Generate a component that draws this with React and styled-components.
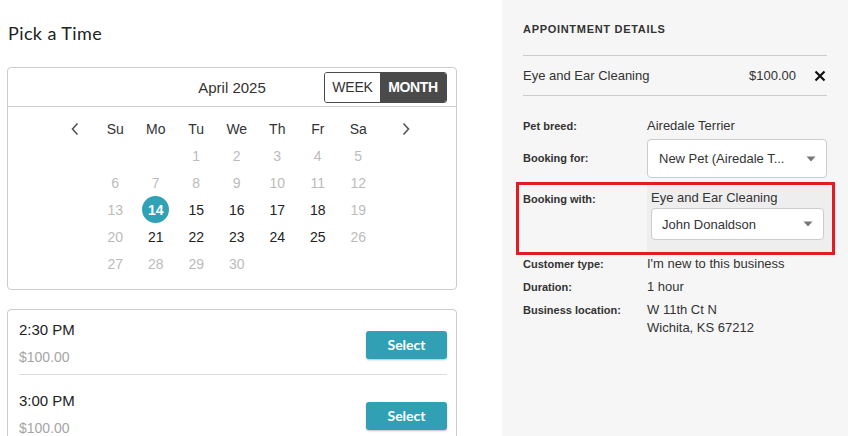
import React from "react";
import styled, { createGlobalStyle } from "styled-components";

const GlobalStyle = createGlobalStyle`
  html, body {
    margin: 0;
    padding: 0;
    background: #ffffff;
    font-family: "Liberation Sans", Arial, sans-serif;
    color: #333333;
  }
`;

const WEEKDAYS = ["Su", "Mo", "Tu", "We", "Th", "Fr", "Sa"];
const AVAILABLE = [15, 16, 17, 18, 21, 22, 23, 24, 25];
const SELECTED = 14;

const SLOTS = [
  { time: "2:30 PM", price: "$100.00" },
  { time: "3:00 PM", price: "$100.00" },
];

const Chevron = ({ dir }) => (
  <svg width="10" height="14" viewBox="0 0 10 14" fill="none">
    <path
      d={dir === "left" ? "M7.5 1.5 L2.5 7 L7.5 12.5" : "M2.5 1.5 L7.5 7 L2.5 12.5"}
      stroke="#555"
      strokeWidth="1.6"
    />
  </svg>
);

const Caret = () => (
  <svg width="10" height="6" viewBox="0 0 10 6">
    <path d="M0.5 0.5 H9.5 L5 5.5 Z" fill="#777" />
  </svg>
);

const CloseIcon = () => (
  <svg width="12" height="12" viewBox="0 0 12 12">
    <path d="M1.5 1.5 L10.5 10.5 M10.5 1.5 L1.5 10.5" stroke="#111" strokeWidth="2.2" />
  </svg>
);

export default function App() {
  const cells = [];
  for (let i = 0; i < 2; i++) cells.push(null);
  for (let d = 1; d <= 30; d++) cells.push(d);

  return (
    <>
      <GlobalStyle />
      <Page>
        <Main>
          <Title>Pick a Time</Title>

          <CalendarCard>
            <CalendarHeader>
              <span />
              <MonthLabel>April 2025</MonthLabel>
              <Toggle>
                <ToggleButton>WEEK</ToggleButton>
                <ToggleButton $active>MONTH</ToggleButton>
              </Toggle>
            </CalendarHeader>
            <CalendarBody>
              <Arrow>
                <Chevron dir="left" />
              </Arrow>
              <DaysGrid>
                {WEEKDAYS.map((w) => (
                  <Weekday key={w}>{w}</Weekday>
                ))}
                {cells.map((d, i) =>
                  d === null ? (
                    <DayCell key={"e" + i} />
                  ) : (
                    <DayCell key={d}>
                      {d === SELECTED ? (
                        <SelectedDay>{d}</SelectedDay>
                      ) : (
                        <DayNumber $available={AVAILABLE.includes(d)}>{d}</DayNumber>
                      )}
                    </DayCell>
                  )
                )}
              </DaysGrid>
              <Arrow $right>
                <Chevron dir="right" />
              </Arrow>
            </CalendarBody>
          </CalendarCard>

          <SlotsCard>
            {SLOTS.map((s, i) => (
              <Slot key={s.time} $first={i === 0}>
                <SlotInfo>
                  <SlotTime>{s.time}</SlotTime>
                  <SlotPrice>{s.price}</SlotPrice>
                </SlotInfo>
                <SelectButton>Select</SelectButton>
              </Slot>
            ))}
          </SlotsCard>
        </Main>

        <Sidebar>
          <SidebarTitle>APPOINTMENT DETAILS</SidebarTitle>
          <ServiceRow>
            <ServiceName>Eye and Ear Cleaning</ServiceName>
            <ServicePrice>$100.00</ServicePrice>
            <RemoveButton>
              <CloseIcon />
            </RemoveButton>
          </ServiceRow>

          <Details>
            <DetailRow $top={21}>
              <Label>Pet breed:</Label>
              <Value>Airedale Terrier</Value>
            </DetailRow>
            <DetailRow $top={4}>
              <Label $pad={10}>Booking for:</Label>
              <Dropdown $height={39} $padLeft={11}>
                <DropdownText>New Pet (Airedale T...</DropdownText>
                <Caret />
              </Dropdown>
            </DetailRow>
            <HighlightRow>
              <Label $pad={5}>Booking with:</Label>
              <HighlightValue>
                <Value>Eye and Ear Cleaning</Value>
                <Dropdown $height={32} $padLeft={10}>
                  <DropdownText>John Donaldson</DropdownText>
                  <Caret />
                </Dropdown>
              </HighlightValue>
            </HighlightRow>
            <DetailRow $top={0}>
              <Label>Customer type:</Label>
              <Value>I'm new to this business</Value>
            </DetailRow>
            <DetailRow $top={5}>
              <Label>Duration:</Label>
              <Value>1 hour</Value>
            </DetailRow>
            <DetailRow $top={5}>
              <Label>Business location:</Label>
              <Value>
                W 11th Ct N
                <br />
                Wichita, KS 67212
              </Value>
            </DetailRow>
          </Details>
        </Sidebar>
      </Page>
    </>
  );
}

const Page = styled.div`
  display: flex;
  height: 100vh;
  overflow: hidden;
`;

const Main = styled.div`
  width: 502px;
  flex-shrink: 0;
  padding-left: 7px;
  box-sizing: border-box;
`;

const Title = styled.h1`
  font-family: "Lato", "Liberation Sans", sans-serif;
  font-size: 18px;
  font-weight: 400;
  line-height: 22px;
  color: #222;
  margin: 22px 0 0 1px;
  letter-spacing: 0.4px;
`;

const CalendarCard = styled.div`
  width: 450px;
  box-sizing: border-box;
  margin-top: 23px;
  border: 1px solid #cccccc;
  border-radius: 4px;
`;

const CalendarHeader = styled.div`
  display: grid;
  grid-template-columns: 1fr auto 1fr;
  align-items: center;
  height: 38px;
  border-bottom: 1px solid #cccccc;
  padding-right: 9px;
  padding-left: 9px;
`;

const MonthLabel = styled.div`
  font-size: 15px;
  color: #333;
`;

const Toggle = styled.div`
  justify-self: end;
  display: flex;
  height: 31px;
  box-sizing: border-box;
  border: 1px solid #4a4a4a;
  border-radius: 3px;
  overflow: hidden;
`;

const ToggleButton = styled.div`
  display: flex;
  align-items: center;
  justify-content: center;
  width: ${({ $active }) => ($active ? "66px" : "55px")};
  font-size: 14px;
  font-weight: ${({ $active }) => ($active ? 700 : 400)};
  letter-spacing: ${({ $active }) => ($active ? "-0.4px" : "-0.2px")};
  background: ${({ $active }) => ($active ? "#4a4a4a" : "#ffffff")};
  color: ${({ $active }) => ($active ? "#ffffff" : "#333333")};
`;

const CalendarBody = styled.div`
  display: flex;
  align-items: flex-start;
  padding: 8px 0 12px 47px;
`;

const Arrow = styled.div`
  width: ${({ $right }) => ($right ? "54px" : "40px")};
  height: 27px;
  display: flex;
  align-items: center;
  justify-content: center;
`;

const DaysGrid = styled.div`
  display: grid;
  grid-template-columns: repeat(7, 40.5px);
  grid-auto-rows: 27px;
`;

const Weekday = styled.div`
  display: flex;
  align-items: center;
  justify-content: center;
  font-size: 14px;
  color: #333;
`;

const DayCell = styled.div`
  display: flex;
  align-items: center;
  justify-content: center;
`;

const DayNumber = styled.span`
  font-size: 14px;
  color: ${({ $available }) => ($available ? "#222222" : "#bbbbbb")};
`;

const SelectedDay = styled.span`
  width: 27px;
  height: 27px;
  border-radius: 50%;
  background: #31a1b6;
  color: #ffffff;
  font-size: 14px;
  font-weight: 700;
  display: flex;
  align-items: center;
  justify-content: center;
`;

const SlotsCard = styled.div`
  width: 450px;
  box-sizing: border-box;
  margin-top: 19px;
  border: 1px solid #cccccc;
  border-radius: 4px;
  padding: 0 9px 0 11px;
`;

const Slot = styled.div`
  display: flex;
  align-items: center;
  justify-content: space-between;
  padding: ${({ $first }) => ($first ? "10px" : "16px")} 0 7px;
  border-bottom: 1px solid #dddddd;
`;

const SlotInfo = styled.div`
  display: flex;
  flex-direction: column;
  gap: 7px;
`;

const SlotTime = styled.div`
  font-size: 15px;
  line-height: 20px;
  color: #222;
`;

const SlotPrice = styled.div`
  font-size: 14px;
  line-height: 20px;
  color: #a5a5a5;
`;

const SelectButton = styled.button`
  width: 81px;
  height: 28px;
  margin-top: 2px;
  border: none;
  border-radius: 3px;
  background: #31a0b5;
  color: #ffffff;
  font-family: "Lato", "Liberation Sans", sans-serif;
  font-size: 14px;
  font-weight: 700;
  box-shadow: 0 1px 2px rgba(0, 0, 0, 0.25);
  cursor: pointer;
`;

const Sidebar = styled.div`
  flex: 1;
  background: #f6f6f6;
  padding: 21px 21px 0;
  box-sizing: border-box;
`;

const SidebarTitle = styled.div`
  font-size: 11px;
  font-weight: 700;
  line-height: 16px;
  letter-spacing: 0.7px;
  color: #333;
  margin-bottom: 18px;
`;

const ServiceRow = styled.div`
  display: flex;
  align-items: center;
  height: 39px;
  border-top: 1px solid #cccccc;
  border-bottom: 1px solid #cccccc;
  font-size: 13px;
  color: #333;
`;

const ServiceName = styled.div`
  flex: 1;
`;

const ServicePrice = styled.div`
  margin-right: 18px;
`;

const RemoveButton = styled.div`
  display: flex;
  align-items: center;
  margin-right: 1px;
`;

const Details = styled.div`
  display: flex;
  flex-direction: column;
`;

const DetailRow = styled.div`
  display: grid;
  grid-template-columns: 124px 1fr;
  align-items: start;
  margin-top: ${({ $top }) => $top}px;
`;

const Label = styled.div`
  font-size: 11px;
  font-weight: 700;
  line-height: 18px;
  color: #333;
  padding-top: ${({ $pad }) => $pad || 0}px;
`;

const Value = styled.div`
  font-size: 13px;
  line-height: 18px;
  color: #333;
`;

const HighlightRow = styled.div`
  display: grid;
  grid-template-columns: 124px 1fr;
  align-items: stretch;
  margin: 4px -8px 0 -7px;
  border: 3px solid #e41b22;
  padding-left: 4px;
`;

const HighlightValue = styled.div`
  background: #eeeeee;
  padding: 4px 8px 12px 4px;
  display: flex;
  flex-direction: column;
  gap: 1px;
`;

const Dropdown = styled.div`
  display: flex;
  align-items: center;
  justify-content: space-between;
  height: ${({ $height }) => $height}px;
  box-sizing: border-box;
  background: #ffffff;
  border: 1px solid #cccccc;
  border-radius: 4px;
  padding: 0 10px 0 ${({ $padLeft }) => $padLeft}px;
`;

const DropdownText = styled.span`
  font-size: 13px;
  color: #333;
  white-space: nowrap;
`;
